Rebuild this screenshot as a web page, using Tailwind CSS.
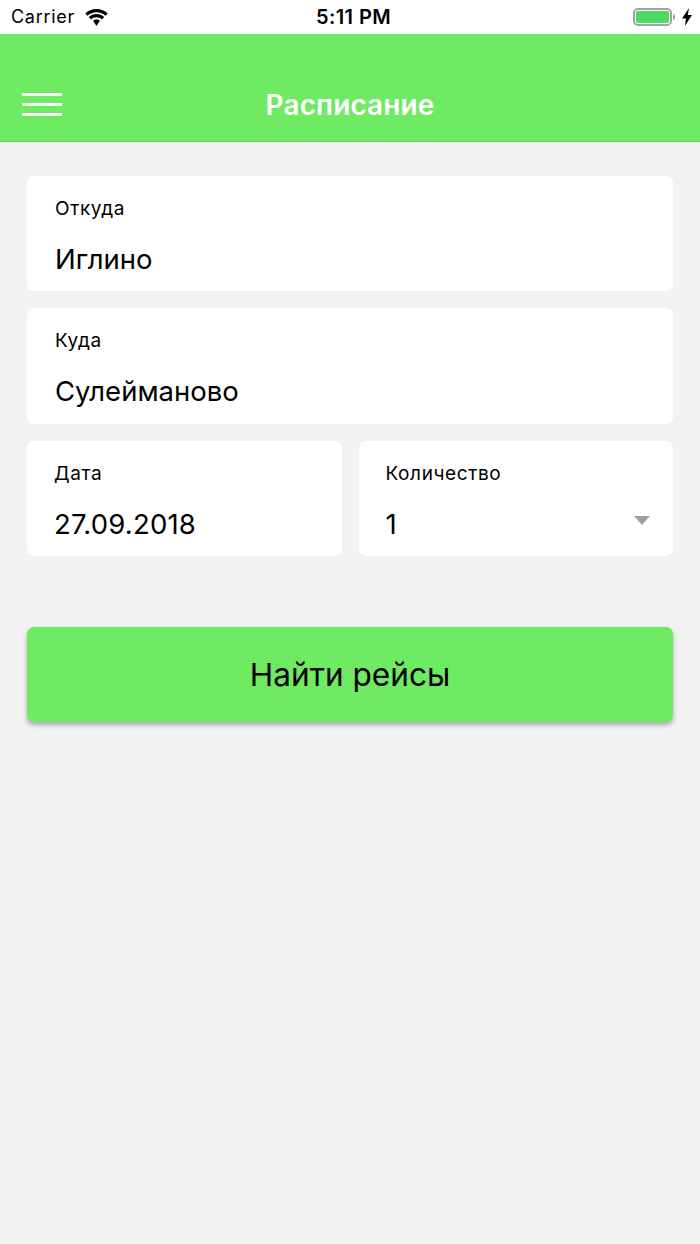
<!DOCTYPE html>
<html lang="en">
<head>
    <meta charset="UTF-8">
    <meta name="viewport" content="width=device-width, initial-scale=1.0">
    <title>Расписание</title>
    <script src="https://cdn.jsdelivr.net/npm/@tailwindcss/browser@4"></script>
</head>
<body class="bg-[#f2f2f2] text-black font-['Inter','Noto_Sans',sans-serif] w-[700px] h-[1244px] overflow-hidden">

    <!-- Status bar -->
    <div class="h-[34px] bg-white flex items-center justify-between relative pl-[11px] pr-[8px]">
        <div class="flex items-center gap-[10px]">
            <span class="text-[18px] leading-[34px] tracking-[0.7px]">Carrier</span>
            <svg width="23" height="17" viewBox="1.3 0 22.4 17" fill="#000">
                <path d="M12.5 3.2c3.5 0 6.6 1.3 9 3.5l2.2-2.3C20.8 1.6 16.9 0 12.5 0S4.200 1.600 1.300 4.400l2.200 2.300c2.400-2.200 5.500-3.500 9-3.500z"/>
                <path d="M12.500 8.300c2.100 0 4 .8 5.500 2.100l2.200-2.300c-2.100-1.900-4.800-3-7.700-3s-5.600 1.100-7.700 3L7 10.400c1.500-1.300 3.400-2.100 5.500-2.100z"/>
                <path d="M12.500 10.500c-1.300 0-2.500.5-3.400 1.300l3.400 5.200 3.400-5.200c-.9-.8-2.100-1.300-3.400-1.300z"/>
            </svg>
        </div>
        <span class="absolute left-[7px] right-0 text-center text-[20px] leading-[34px] font-semibold tracking-[0.4px]">5:11 PM</span>
        <div class="flex items-center gap-[7px]">
            <div class="flex items-center gap-[1px]">
                <div class="w-[39px] h-[18px] rounded-[5px] border-2 border-[#a3a3a3] p-px">
                    <div class="w-full h-full rounded-[2px] bg-[#4cd964]"></div>
                </div>
                <div class="w-[2px] h-[6px] rounded-r-[2px] bg-[#a3a3a3]"></div>
            </div>
            <svg width="10" height="18" viewBox="0 0 10 18" fill="#000">
                <path d="M7 0 0 10.500h4L2.800 18 10 7H5.800z"/>
            </svg>
        </div>
    </div>

    <!-- Header -->
    <header class="h-[108px] bg-[#6eea63] border-b border-[#5fd055] flex items-end relative pb-[19px] pl-[22px]">
        <div class="flex flex-col gap-[7px] w-[40px] mb-[6px]">
            <div class="h-[3px] bg-white"></div>
            <div class="h-[3px] bg-white"></div>
            <div class="h-[3px] bg-white"></div>
        </div>
        <h1 class="absolute left-0 right-0 bottom-[19px] text-center text-white text-[28px] leading-[34px] font-semibold tracking-[0.1px]">Расписание</h1>
    </header>

    <!-- Form -->
    <main class="px-[27px] pt-[34px]">
        <div class="flex flex-col gap-[17px]">
            <div class="bg-white rounded-[7px] h-[115px] pl-[28px] pt-[21px]">
                <div class="text-[19px] leading-[24px] tracking-[0.6px]">Откуда</div>
                <div class="text-[27.5px] leading-[36px] mt-[20px]">Иглино</div>
            </div>
            <div class="bg-white rounded-[7px] h-[116px] pl-[28px] pt-[21px]">
                <div class="text-[19px] leading-[24px] tracking-[0.6px]">Куда</div>
                <div class="text-[27.5px] leading-[36px] mt-[20px]">Сулейманово</div>
            </div>
            <div class="grid grid-cols-2 gap-[17px]">
                <div class="bg-white rounded-[7px] h-[115px] pl-[27px] pt-[21px]">
                    <div class="text-[19px] leading-[24px] tracking-[0.6px]">Дата</div>
                    <div class="text-[27.5px] leading-[36px] mt-[20px] tracking-[0.2px]">27.09.2018</div>
                </div>
                <div class="bg-white rounded-[7px] h-[115px] pl-[27px] pr-[22px] pt-[21px]">
                    <div class="text-[19px] leading-[24px] tracking-[0.6px]">Количество</div>
                    <div class="flex items-center justify-between mt-[20px]">
                        <span class="text-[27.5px] leading-[36px]">1</span>
                        <div class="w-0 h-0 border-x-[8.5px] border-x-transparent border-t-[9px] border-t-[#a0a0a0] mb-[8px] mr-[1px]"></div>
                    </div>
                </div>
            </div>
        </div>
        <button class="mt-[71px] w-full h-[95px] rounded-[7px] bg-[#6eea63] text-[31.600px] leading-[40px] shadow-[0_3px_5px_rgba(0,0,0,0.3)]">Найти рейсы</button>
    </main>

</body>
</html>
